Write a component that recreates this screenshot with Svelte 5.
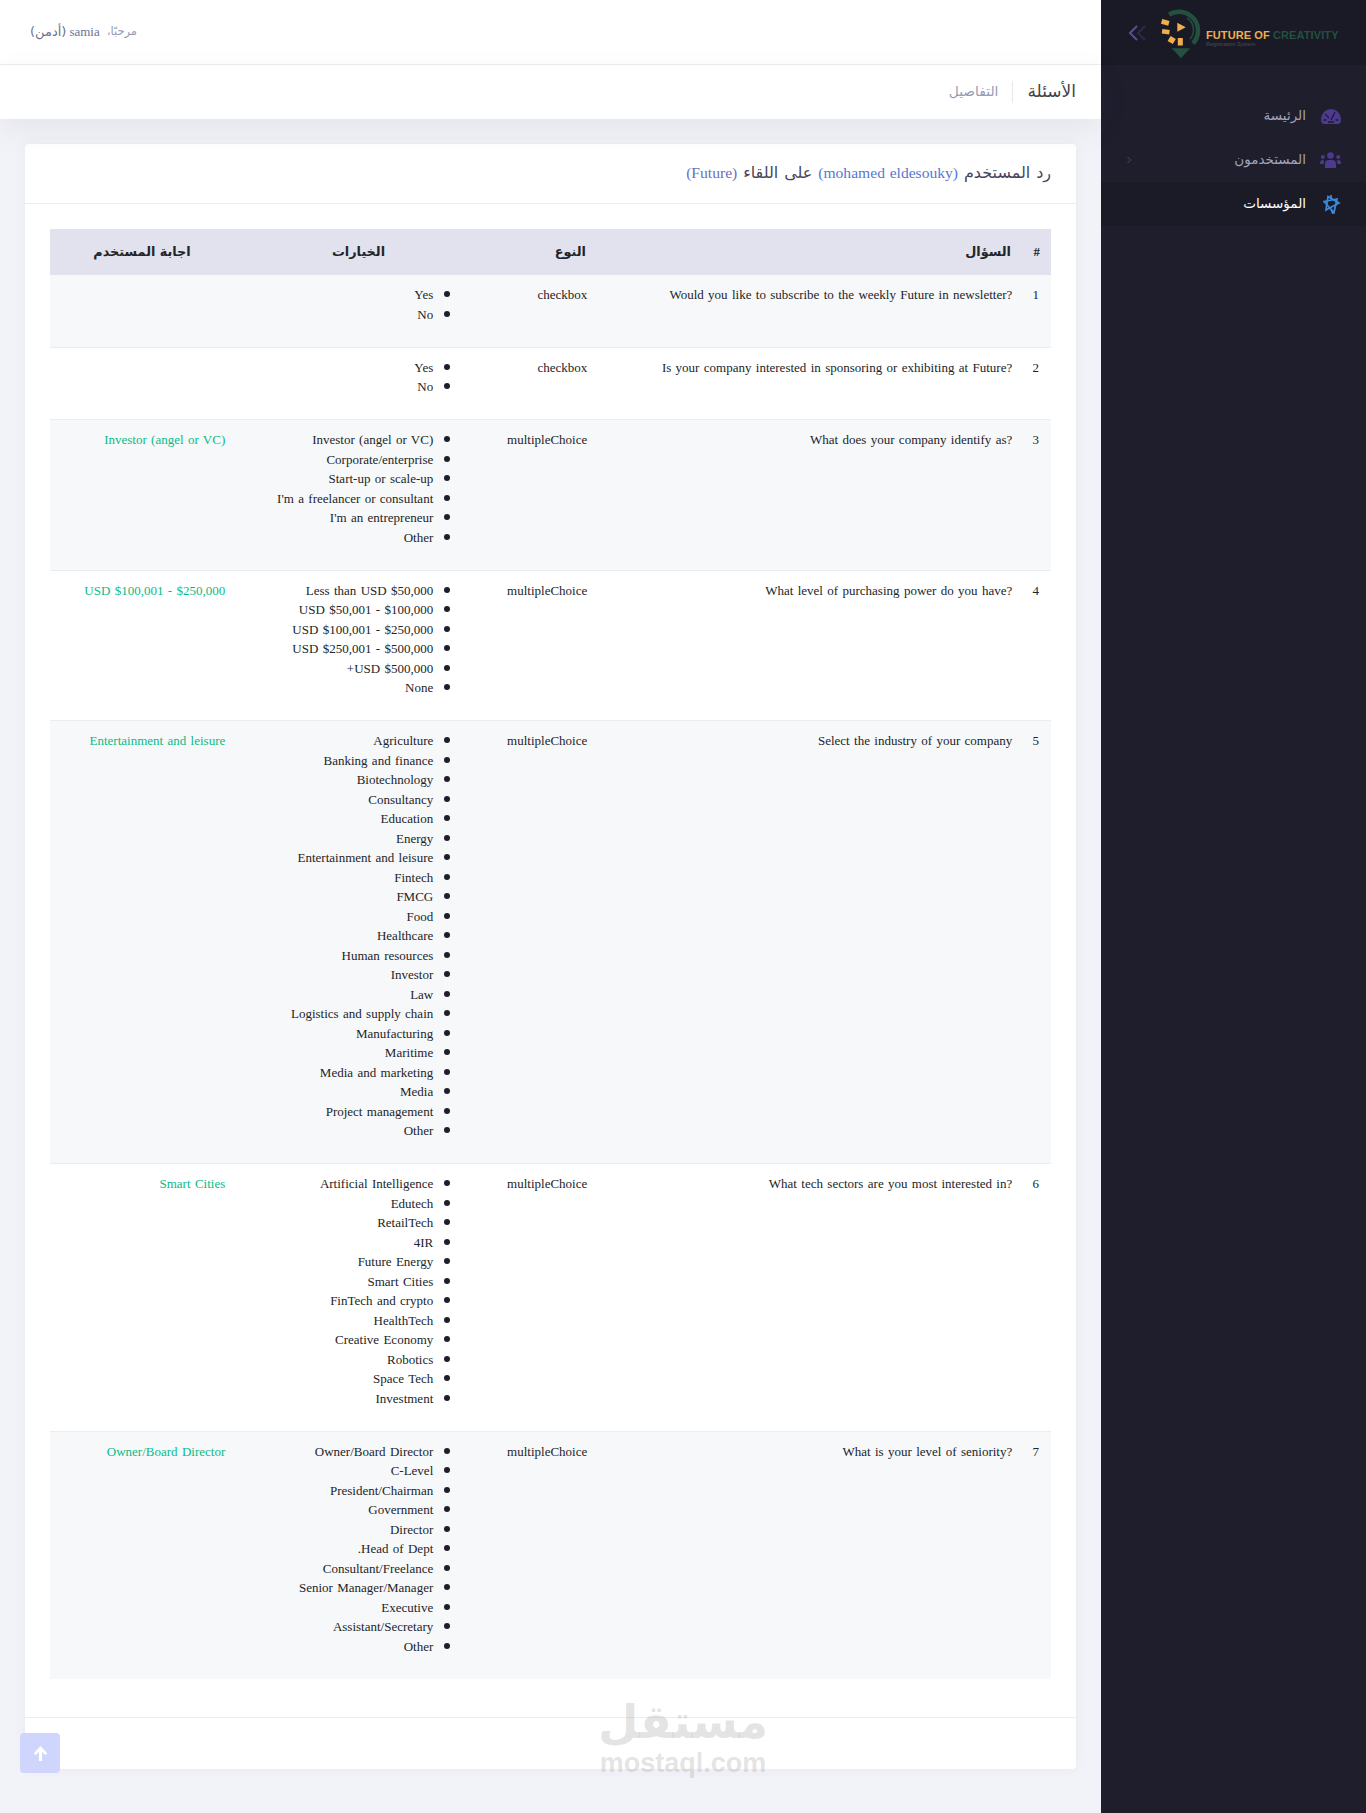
<script>
    const rows = [
        { q: "Would you like to subscribe to the weekly Future in newsletter?", type: "checkbox", answer: "", options: ["Yes", "No"] },
        { q: "Is your company interested in sponsoring or exhibiting at Future?", type: "checkbox", answer: "", options: ["Yes", "No"] },
        { q: "What does your company identify as?", type: "multipleChoice", answer: "Investor (angel or VC)", options: ["Investor (angel or VC)", "Corporate/enterprise", "Start-up or scale-up", "I'm a freelancer or consultant", "I'm an entrepreneur", "Other"] },
        { q: "What level of purchasing power do you have?", type: "multipleChoice", answer: "USD $100,001 - $250,000", options: ["Less than USD $50,000", "USD $50,001 - $100,000", "USD $100,001 - $250,000", "USD $250,001 - $500,000", "USD $500,000+", "None"] },
        { q: "Select the industry of your company", type: "multipleChoice", answer: "Entertainment and leisure", options: ["Agriculture", "Banking and finance", "Biotechnology", "Consultancy", "Education", "Energy", "Entertainment and leisure", "Fintech", "FMCG", "Food", "Healthcare", "Human resources", "Investor", "Law", "Logistics and supply chain", "Manufacturing", "Maritime", "Media and marketing", "Media", "Project management", "Other"] },
        { q: "What tech sectors are you most interested in?", type: "multipleChoice", answer: "Smart Cities", options: ["Artificial Intelligence", "Edutech", "RetailTech", "4IR", "Future Energy", "Smart Cities", "FinTech and crypto", "HealthTech", "Creative Economy", "Robotics", "Space Tech", "Investment"] },
        { q: "What is your level of seniority?", type: "multipleChoice", answer: "Owner/Board Director", options: ["Owner/Board Director", "C-Level", "President/Chairman", "Government", "Director", "Head of Dept.", "Consultant/Freelance", "Senior Manager/Manager", "Executive", "Assistant/Secretary", "Other"] }
    ];
</script>

<div class="page">
    <aside class="sidebar">
        <div class="brand">
            <svg class="toggle" width="18" height="16" viewBox="0 0 18 16" fill="none">
                <path d="M9 1 L2 8 L9 15" stroke="#5d4d91" stroke-width="2" />
                <path d="M17 1 L10 8 L17 15" stroke="#2c2b45" stroke-width="2" />
            </svg>
            <svg class="logo" width="45" height="60" viewBox="0 0 45 60">
                <path d="M9 14.500 A19 19 0 0 1 33 43.500" fill="none" stroke="#24503f" stroke-width="4.500" />
                <path d="M27 18 A14 14 0 0 1 30 39" fill="none" stroke="#24503f" stroke-width="1.500" />
                <path d="M11.700 48.300 H30 L21 58.300 Z" fill="#24503f" />
                <g fill="#eeb04f">
                    <rect x="1.500" y="19.800" width="7.500" height="5" transform="rotate(15 5 22.300)" />
                    <rect x="2" y="29.500" width="7.500" height="4.500" transform="rotate(8 5.700 31.700)" />
                    <rect x="8.700" y="37" width="6" height="6" transform="rotate(30 11.700 40)" />
                    <rect x="17.800" y="38" width="5" height="7.500" />
                    <path d="M17.300 22.700 L25.700 27.300 L17.300 31.700 Z" />
                </g>
            </svg>
            <div class="brand-text">
                <div class="brand-name"><span class="gold">FUTURE OF</span> <span class="green">CREATIVITY</span></div>
                <div class="brand-sub">Registration System</div>
            </div>
        </div>
        <nav class="menu">
            <div class="item">
                <span class="ico">
                    <svg width="20" height="15" viewBox="0 0 20 15">
                        <path d="M0 10 A10 10 0 0 1 20 10 Q20 15 17 15 H3 Q0 15 0 10 Z" fill="#4d3a8f" />
                        <path d="M10 11 L14 3 M4 5 L8 9 M2.500 11 H5.500 M14.500 11 H17.500 M7 13 H13" stroke="#1e1e2d" stroke-width="1.300" fill="none" />
                    </svg>
                </span>
                <span>الرئيسة</span>
            </div>
            <div class="item">
                <span class="ico">
                    <svg width="21" height="16" viewBox="0 0 21 16" fill="#4d3a8f">
                        <circle cx="10.500" cy="3.500" r="3.300" />
                        <circle cx="2.800" cy="5" r="2" />
                        <circle cx="18.200" cy="5" r="2" />
                        <path d="M5 16 V12 Q5 8 9 8 H12 Q16 8 16 12 V16 Z" />
                        <path d="M0 12 Q0 8 2.500 8 L4.500 9 Q3.500 10 3.500 12 Z M21 12 Q21 8 18.500 8 L16.500 9 Q17.500 10 17.500 12 Z" />
                    </svg>
                </span>
                <span>المستخدمون</span>
                <svg class="caret" width="6" height="8" viewBox="0 0 6 8" fill="none"><path d="M1.500 1 L4.500 4 L1.500 7" stroke="#494b74" /></svg>
            </div>
            <div class="item active">
                <span class="ico">
                    <svg width="18" height="19" viewBox="0 0 18 19" fill="none" stroke="#3b8bdc" stroke-width="1.700">
                        <path d="M5 1.500 L16 8 L3 15 Z" />
                        <path d="M1 6.500 L14 4 L11 17.500 Z" />
                        <path d="M8 0 V4 M8 14 L10 19" />
                    </svg>
                </span>
                <span>المؤسسات</span>
            </div>
        </nav>
    </aside>

    <div class="main">
        <header class="topbar">
            <span class="hello">مرحبًا،</span>
            <span class="user">samia</span>
            <span class="role">(أدمن)</span>
        </header>
        <div class="subheader">
            <h3>الأسئلة</h3>
            <span class="sep"></span>
            <span class="crumb">التفاصيل</span>
        </div>

        <div class="content">
            <section class="card">
                <div class="card-head">
                    <h3>رد المستخدم <span class="blue">(mohamed eldesouky)</span> على اللقاء <span class="purple">(Future)</span></h3>
                </div>
                <div class="card-body">
                    <table>
                        <colgroup>
                            <col style="width:29px" />
                            <col style="width:425px" />
                            <col style="width:114px" />
                            <col style="width:248px" />
                            <col style="width:185px" />
                        </colgroup>
                        <thead>
                            <tr>
                                <th>#</th>
                                <th>السؤال</th>
                                <th>النوع</th>
                                <th class="center">الخيارات</th>
                                <th class="center">اجابة المستخدم</th>
                            </tr>
                        </thead>
                        <tbody>
                            {#each rows as row, i}
                                <tr class:odd={i % 2 === 0}>
                                    <td>{i + 1}</td>
                                    <td class="question">{row.q}</td>
                                    <td>{row.type}</td>
                                    <td>
                                        <ul>
                                            {#each row.options as opt}
                                                <li>{opt}</li>
                                            {/each}
                                        </ul>
                                    </td>
                                    <td class="answer">{row.answer}</td>
                                </tr>
                            {/each}
                        </tbody>
                    </table>
                </div>
                <div class="card-foot"></div>
            </section>
        </div>
    </div>

    <div class="watermark">
        <div class="wm-ar">مستقل</div>
        <div class="wm-en">mostaql.com</div>
    </div>

    <button class="to-top" aria-label="top">
        <svg width="15" height="17" viewBox="0 0 14 16" fill="#fff">
            <path d="M7 1 L13.500 8 L11.500 9.500 L8.500 6.500 V15 H5.500 V6.500 L2.500 9.500 L0.500 8 Z" />
        </svg>
    </button>
</div>

<style>
    :global(body) {
        margin: 0;
        background: #f2f3f8;
    }
    .page {
        direction: rtl;
        display: flex;
        min-height: 1813px;
        position: relative;
        font-family: "Liberation Serif", "DejaVu Sans", serif;
        font-size: 13px;
        line-height: 19.5px;
        word-spacing: 1.100px;
        color: #212529;
        overflow: hidden;
    }
    .sidebar {
        width: 265px;
        flex: none;
        background: #1e1e2d;
    }
    .brand {
        height: 65px;
        background: #1a1a27;
        display: flex;
        align-items: flex-start;
        direction: ltr;
        padding-left: 27px;
        box-sizing: border-box;
    }
    .toggle {
        margin-top: 25px;
    }
    .logo {
        margin-left: 14px;
    }
    .brand-text {
        margin-left: 1px;
        margin-top: 29px;
        white-space: nowrap;
        word-spacing: 0;
    }
    .brand-name {
        font-family: "Liberation Sans", sans-serif;
        font-weight: 700;
        font-size: 11px;
        line-height: 12px;
        letter-spacing: 0.100px;
    }
    .gold {
        color: #eeb04f;
    }
    .green {
        color: #24503f;
    }
    .brand-sub {
        font-family: "Liberation Sans", sans-serif;
        font-size: 5.500px;
        line-height: 6px;
        color: #4a4c57;
    }
    .menu {
        padding-top: 29px;
    }
    .item {
        height: 44px;
        display: flex;
        align-items: center;
        padding: 0 25px;
        gap: 13px;
        font-family: "DejaVu Sans", sans-serif;
        font-size: 13.500px;
        color: #a2a3b7;
    }
    .ico {
        width: 22px;
        display: flex;
        justify-content: flex-start;
        flex: none;
    }
    .item .caret {
        margin-right: auto;
    }
    .item.active {
        background: #1b1b28;
        color: #fff;
    }
    .main {
        flex: 1;
        min-width: 0;
    }
    .topbar {
        height: 65px;
        background: #fff;
        border-bottom: 1px solid #ebedf2;
        display: flex;
        justify-content: flex-end;
        align-items: center;
        padding-left: 30px;
        box-sizing: border-box;
    }
    .hello {
        color: #959cb6;
        font-family: "DejaVu Sans", sans-serif;
        font-size: 11.500px;
    }
    .user {
        color: #6c7293;
        margin: 0 7px 0 3px;
    }
    .role {
        color: #6c7293;
        font-family: "DejaVu Sans", sans-serif;
        font-size: 13px;
    }
    .subheader {
        height: 54px;
        background: #fff;
        box-shadow: 0 10px 30px 0 rgba(82, 63, 105, 0.08);
        display: flex;
        align-items: center;
        padding: 0 25px;
        position: relative;
    }
    .subheader h3 {
        margin: 0;
        font-family: "DejaVu Sans", sans-serif;
        font-weight: 400;
        font-size: 17px;
        color: #434349;
    }
    .sep {
        width: 1px;
        height: 22px;
        background: #e7e8ef;
        margin: 0 14px;
    }
    .crumb {
        font-family: "DejaVu Sans", sans-serif;
        font-size: 13.800px;
        color: #959cb6;
    }
    .content {
        padding: 25px;
    }
    .card {
        background: #fff;
        border-radius: 4px;
        box-shadow: 0 0 13px 0 rgba(82, 63, 105, 0.05);
    }
    .card-head {
        height: 57px;
        border-bottom: 1px solid #ebedf2;
        padding: 0 25px 2px;
        display: flex;
        align-items: center;
    }
    .card-head h3 {
        margin: 0;
        font-family: "DejaVu Sans", sans-serif;
        font-weight: 400;
        font-size: 16px;
        word-spacing: 0.800px;
        color: #48465b;
    }
    .blue,
    .purple {
        font-family: "Liberation Serif", serif;
        font-size: 15.600px;
    }
    .blue {
        color: #5578d0;
    }
    .purple {
        color: #6a6fb8;
    }
    .card-body {
        padding: 25px 25px 38px;
    }
    table {
        width: 1001px;
        table-layout: fixed;
        border-collapse: collapse;
    }
    th {
        height: 45.400px;
        padding: 1px 11px 0 10px;
        background: #e2e1ee;
        text-align: right;
        font-size: 12.800px;
        font-weight: 700;
        color: #212529;
    }
    th.center {
        text-align: center;
    }
    td {
        padding: 9.750px;
        vertical-align: top;
        text-align: right;
    }
    td:first-child {
        padding-right: 12px;
    }
    .question {
        direction: ltr;
    }
    tbody tr {
        border-bottom: 1px solid #ebedf2;
    }
    tbody tr:last-child {
        border-bottom: 0;
    }
    .odd {
        background: #f7f8fa;
    }
    ul {
        margin: 0 0 13px;
        padding: 0 40px 0 0;
        list-style: none;
    }
    li {
        position: relative;
    }
    li::before {
        content: "";
        position: absolute;
        right: -17px;
        top: 6px;
        width: 6px;
        height: 6px;
        border-radius: 50%;
        background: #1e1e2d;
    }
    .answer {
        color: #0abb87;
    }
    .card-foot {
        height: 51px;
        border-top: 1px solid #ebedf2;
    }
    .watermark {
        position: absolute;
        left: 598px;
        top: 1696px;
        width: 170px;
        text-align: center;
        font-family: "DejaVu Sans", sans-serif;
        font-weight: 700;
        color: rgba(150, 150, 150, 0.25);
    }
    .wm-ar {
        font-size: 46.500px;
        line-height: 52px;
    }
    .wm-en {
        font-family: "Liberation Sans", sans-serif;
        font-size: 27px;
        line-height: 26px;
        margin-top: 2px;
    }
    .to-top {
        position: absolute;
        left: 20px;
        top: 1733px;
        width: 40px;
        height: 40px;
        border: 0;
        border-radius: 4px;
        background: #cfd5fd;
        display: flex;
        align-items: center;
        justify-content: center;
        padding: 0;
    }
</style>
